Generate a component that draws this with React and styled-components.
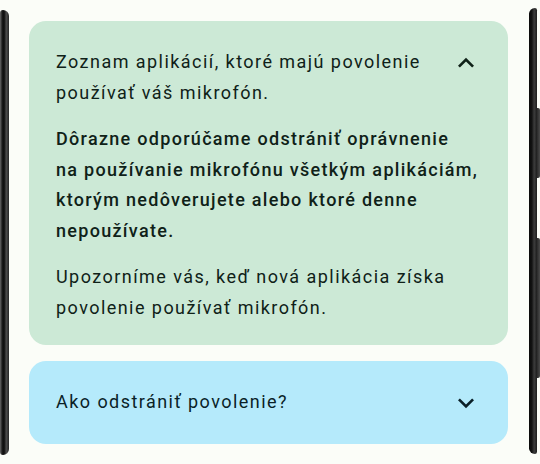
import React from "react";
import styled, { createGlobalStyle } from "styled-components";

const Global = createGlobalStyle`
  html, body { margin: 0; padding: 0; background: #fbfdf8; }
  body { font-family: Roboto, "Noto Sans", sans-serif; -webkit-font-smoothing: antialiased; }
`;

const Frame = styled.div`
  display: flex;
  width: 540px;
  height: 464px;
  background: #fbfdf8;
  overflow: hidden;
`;

const LeftBezel = styled.div`
  flex: 0 0 9px;
  margin-top: 10px;
  height: 445px;
  border-radius: 4px 8px 8px 4px;
  background: linear-gradient(to right, #6a6a6a 0%, #1a1a1a 25%, #0c0c0c 45%, #4c4c4c 70%, #262626 100%);
`;

const RightSide = styled.div`
  flex: 0 0 11px;
  display: flex;
  margin-top: 8px;
  height: 446px;
`;

const RightBezel = styled.div`
  flex: 0 0 8px;
  border-radius: 8px 3px 3px 8px;
  background: linear-gradient(to right, #0a0a0a 0%, #121212 35%, #3c3c3c 65%, #1e1e1e 100%);
`;

const ButtonRail = styled.div`
  flex: 0 0 3px;
  display: flex;
  flex-direction: column;
  padding-top: 100px;
  gap: 60px;
`;

const SideButton = styled.div`
  height: ${(p) => p.$h}px;
  background: linear-gradient(to right, #2a2a2a, #4a4a4a);
  border-radius: 0 2px 2px 0;
`;

const Screen = styled.div`
  flex: 1;
  display: flex;
  flex-direction: column;
  gap: 16px;
  padding: 21px 21px 0 20px;
`;

const Card = styled.section`
  border-radius: 17px;
  background: ${(p) => p.$bg};
  color: ${(p) => p.$fg};
  padding: ${(p) => p.$pad};
`;

const Header = styled.div`
  display: flex;
  justify-content: space-between;
  align-items: ${(p) => (p.$center ? "center" : "flex-start")};
  min-height: ${(p) => (p.$center ? "83px" : "auto")};
`;

const Text = styled.p`
  margin: 0;
  font-size: 18px;
  line-height: 30.5px;
  white-space: nowrap;
  font-weight: ${(p) => (p.$bold ? 500 : 400)};
  letter-spacing: ${(p) => (p.$bold ? "1.3px" : "1.45px")};
`;

const Body = styled.div`
  display: flex;
  flex-direction: column;
  gap: 16px;
  margin-top: 16px;
`;

const Icon = styled.svg`
  flex: 0 0 32px;
  width: 32px;
  height: 32px;
  fill: currentColor;
`;

const ChevronUp = () => (
  <Icon viewBox="0 0 24 24" aria-hidden="true">
    <path d="M12 8l-6 6 1.41 1.41L12 10.83l4.59 4.58L18 14z" />
  </Icon>
);

const ChevronDown = () => (
  <Icon viewBox="0 0 24 24" aria-hidden="true">
    <path d="M16.59 8.59L12 13.17 7.41 8.59 6 10l6 6 6-6z" />
  </Icon>
);

export default function App() {
  return (
    <>
      <Global />
      <Frame>
        <LeftBezel />
        <Screen>
          <Card $bg="#cce9d6" $fg="#0f2118" $pad="26px 26px 22px 27px">
            <Header>
              <Text>
                Zoznam aplikácií, ktoré majú povolenie
                <br />
                používať váš mikrofón.
              </Text>
              <ChevronUp />
            </Header>
            <Body>
              <Text $bold>
                Dôrazne odporúčame odstrániť oprávnenie
                <br />
                na používanie mikrofónu všetkým aplikáciám,
                <br />
                ktorým nedôverujete alebo ktoré denne
                <br />
                nepoužívate.
              </Text>
              <Text>
                Upozorníme vás, keď nová aplikácia získa
                <br />
                povolenie používať mikrofón.
              </Text>
            </Body>
          </Card>
          <Card $bg="#b5eafb" $fg="#0a1f27" $pad="0 26px 0 27px">
            <Header $center>
              <Text>Ako odstrániť povolenie?</Text>
              <ChevronDown />
            </Header>
          </Card>
        </Screen>
        <RightSide>
          <RightBezel />
          <ButtonRail>
            <SideButton $h={70} />
            <SideButton $h={140} />
          </ButtonRail>
        </RightSide>
      </Frame>
    </>
  );
}
